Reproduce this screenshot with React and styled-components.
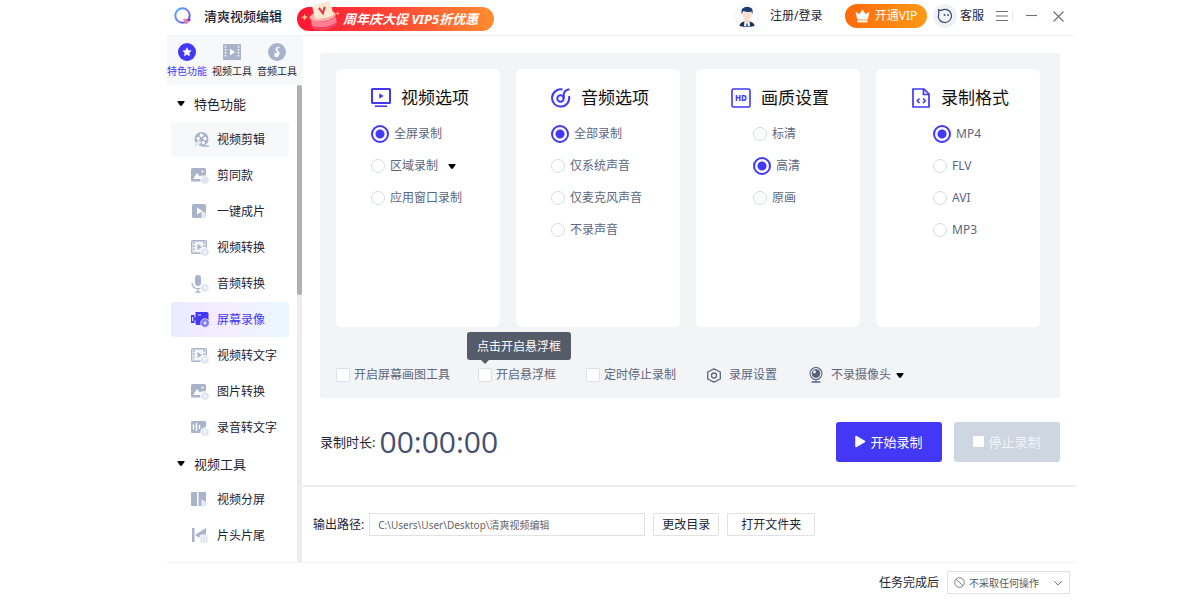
import React, { useState } from "react";
import styled, { createGlobalStyle, css } from "styled-components";

const color = {
  primary: "#4338f5",
  ink: "#1d2433",
  text: "#5d6680",
  icon: "#a9b4cc",
  iconSoft: "#dfe4ee",
  line: "#ededf0",
  panel: "#f3f4f6",
};

const GlobalStyle = createGlobalStyle`
  *, *::before, *::after { box-sizing: border-box; }
  body {
    margin: 0;
    background: #fff;
    color: ${color.ink};
    font-family: "Noto Sans", "Noto Sans CJK SC", sans-serif;
    font-size: 12px;
    line-height: 18px;
  }
  button, input, select { font: inherit; color: inherit; margin: 0; }
  button { padding: 0; border: 0; background: none; cursor: pointer; }
  svg { display: block; flex: none; }
`;

const Window = styled.div`
  display: flex;
  flex-direction: column;
  min-height: 100vh;
  margin: 0 124px 0 167px;
`;

/* Title bar */

const TitleBar = styled.header`
  display: flex;
  align-items: center;
  height: 36px;
  padding: 0 12px 3px 7px;
  border-bottom: 1px solid #f3f4f6;
`;

const AppName = styled.h1`
  margin: 0 15px 0 11px;
  font-size: 13px;
  font-weight: 500;
  white-space: nowrap;
`;

const Promo = styled.a`
  display: flex;
  align-items: center;
  width: 197px;
  height: 24px;
  margin-top: 5px;
  padding-left: 4px;
  gap: 3px;
  border-radius: 12px;
  background: linear-gradient(90deg, #ff1536, #ff4a35 50%, #ff8d30);
  color: #fff;
  font-size: 13px;
  font-weight: 700;
  font-style: italic;
  text-decoration: none;
  white-space: nowrap;

  svg { margin-top: -6px; }
`;

const Account = styled.div`
  display: flex;
  align-items: center;
  margin-left: auto;
`;

const LoginButton = styled.button`
  display: flex;
  align-items: center;
  gap: 11px;
  width: 110px;
  white-space: nowrap;
`;

const VipButton = styled.button`
  display: flex;
  align-items: center;
  justify-content: center;
  gap: 5px;
  width: 82px;
  height: 24px;
  border-radius: 12px;
  background: linear-gradient(90deg, #ff690c, #ff9a17);
  color: #fff;
`;

const SupportButton = styled.button`
  display: flex;
  align-items: center;
  gap: 3px;
  margin: 0 12px 0 6px;
`;

const WindowButtons = styled.div`
  display: flex;
  align-items: center;
  gap: 16px;
`;

const MenuButton = styled.button`
  margin-right: -12px;
`;

const Separator = styled.span`
  width: 1px;
  height: 12px;
  margin-right: -3px;
  background: #e6e9ef;
`;

/* Body */

const Body = styled.div`
  display: flex;
  flex: 1;
`;

const Sidebar = styled.aside`
  display: flex;
  flex-direction: column;
  flex: none;
  width: 136px;
`;

const Categories = styled.div`
  display: flex;
  gap: 5px;
  height: 49px;
  padding-top: 7px;
  background: #f7f8fa;
`;

const Category = styled.button`
  display: flex;
  flex-direction: column;
  align-items: center;
  gap: 2px;
  width: 40px;
  font-size: 10px;
  line-height: 16px;
  color: ${(p) => (p.$active ? color.primary : color.ink)};
  white-space: nowrap;
`;

const ToolArea = styled.div`
  display: flex;
  flex: 1;
`;

const ToolList = styled.nav`
  flex: 1;
  padding: 1px 8px 4px 4px;
`;

const GroupTitle = styled.button`
  display: flex;
  align-items: center;
  gap: 9px;
  width: 100%;
  height: 36px;
  padding: 0 0 1px 6px;
  font-size: 13px;
`;

const Tool = styled.a`
  display: flex;
  align-items: center;
  gap: 8px;
  height: 35px;
  margin-bottom: 1px;
  padding: 1px 0 0 20px;
  border-radius: 3px;
  color: ${color.ink};
  text-decoration: none;
  white-space: nowrap;
  ${(p) => p.$state === "hover" && css`background: #f7f8fa;`}
  ${(p) =>
    p.$state === "active" &&
    css`
      background: linear-gradient(90deg, #ebebff, #f6edff 50%, #e8f8ff);
      color: ${color.primary};
    `}
`;

const ScrollTrack = styled.div`
  width: 5px;
  margin-right: 1px;
  background: ${color.line};
`;

const ScrollThumb = styled.div`
  height: 210px;
  border-radius: 3px;
  background: #b1b1b3;
`;

const Main = styled.main`
  display: flex;
  flex-direction: column;
  flex: 1;
  min-width: 0;
`;

const Panel = styled.section`
  margin: 17px 16px 0 17px;
  padding: 16px 20px 8px 16px;
  border-radius: 3px;
  background: ${color.panel};
`;

const Cards = styled.div`
  display: grid;
  grid-template-columns: repeat(4, 1fr);
  gap: 16px;
`;

const Card = styled.fieldset`
  min-width: 0;
  min-height: 258px;
  margin: 0;
  padding: 15px 0 16px;
  border: 0;
  border-radius: 6px;
  background: #fff;
`;

const CardTitle = styled.legend`
  display: flex;
  float: left;
  align-items: center;
  gap: 10px;
  width: 100%;
  height: 28px;
  margin-bottom: 6px;
  padding: 0 0 0 35px;
  font-size: 17px;
  line-height: 28px;
  color: #111;
  white-space: nowrap;
`;

const Options = styled.div`
  clear: both;
  padding-left: ${(p) => (p.$narrow ? 57 : 35)}px;
`;

const Option = styled.label`
  display: flex;
  align-items: center;
  gap: 5px;
  height: 32px;
  color: ${color.text};
  white-space: nowrap;

  svg { margin-left: 5px; }
`;

const Radio = styled.input.attrs({ type: "radio" })`
  appearance: none;
  flex: none;
  width: 14px;
  height: 14px;
  border: 1px solid #d5dce6;
  border-radius: 50%;
  background: #fff;

  &:checked {
    width: 18px;
    height: 18px;
    border: 2px solid ${color.primary};
    background: radial-gradient(circle, ${color.primary} 4px, #fff 5px);
  }
`;

const Settings = styled.div`
  display: grid;
  grid-template-columns: 142px 108px 121px 102px auto;
  align-items: center;
  height: 30px;
  margin-top: 33px;
  color: ${color.text};
  white-space: nowrap;
`;

const CheckLabel = styled.label`
  position: relative;
  display: flex;
  align-items: center;
  gap: 4px;
`;

const Checkbox = styled.input.attrs({ type: "checkbox" })`
  appearance: none;
  width: 14px;
  height: 14px;
  border: 1px solid #d8e0ea;
  border-radius: 2px;
  background: #fff;

  &:checked { background: ${color.primary}; }
`;

const SettingButton = styled.button`
  display: flex;
  align-items: center;
  gap: 8px;

  svg:last-child:not(:first-child) { margin-left: -3px; }
`;

const Tooltip = styled.span`
  position: absolute;
  bottom: 24px;
  left: -11px;
  padding: 6px 10px 4px;
  border-radius: 3px;
  background: #545c69;
  color: #fff;

  &::after {
    content: "";
    position: absolute;
    top: 100%;
    left: 14px;
    border: 4px solid transparent;
    border-top-color: #545c69;
    border-bottom: 0;
  }
`;

const RecordBar = styled.section`
  display: flex;
  align-items: center;
  height: 89px;
  padding: 0 16px 0 17px;
  border-bottom: 2px solid ${color.line};
  font-size: 13px;
  white-space: nowrap;
`;

const Timer = styled.time`
  margin-left: 4px;
  font-family: "Open Sans", "Noto Sans", sans-serif;
  font-size: 30px;
  line-height: 40px;
  color: #46506e;
`;

const RecordButtons = styled.div`
  display: flex;
  gap: 12px;
  margin-left: auto;
`;

const RecordButton = styled.button`
  display: flex;
  align-items: center;
  justify-content: center;
  gap: 4px;
  width: 106px;
  height: 40px;
  border-radius: 3px;
  background: ${(p) => (p.disabled ? "#cdd6e1" : color.primary)};
  color: ${(p) => (p.disabled ? "#f1f4f8" : "#fff")};
`;

const OutputBar = styled.section`
  display: flex;
  align-items: center;
  flex: 1;
  gap: 8px;
  min-height: 75px;
  padding: 0 10px;
  white-space: nowrap;
`;

const PathLabel = styled.label`
  margin-right: -3px;
`;

const PathInput = styled.input`
  flex: 0 1 276px;
  min-width: 0;
  height: 23px;
  padding: 0 8px;
  border: 1px solid #e2e2e4;
  font-size: 10px;
  color: #666;
`;

const PlainButton = styled.button`
  height: 23px;
  padding: 0 ${(p) => (p.$wide ? 13 : 8)}px;
  border: 1px solid #e2e2e4;
  border-radius: 1px;
  background: #fff;
`;

const Footer = styled.footer`
  display: flex;
  align-items: center;
  justify-content: flex-end;
  gap: 8px;
  height: 38px;
  padding: 2px 6px 0;
  border-top: 1px solid #f3f3f5;
`;

const SelectBox = styled.span`
  display: grid;
  grid-template-columns: 21px 1fr 16px;
  align-items: center;
  width: 123px;
  height: 23px;
  border: 1px solid #e0e1e4;
  color: #555b66;

  svg { grid-row: 1; pointer-events: none; }
  svg:first-child { grid-column: 1; margin-left: 6px; }
  svg:last-child { grid-column: 3; }
`;

const Select = styled.select`
  grid-row: 1;
  grid-column: 1 / -1;
  appearance: none;
  width: 100%;
  padding: 0 0 0 21px;
  border: 0;
  background: none;
  font-size: 10px;
`;

/* Icons */

const Caret = () => (
  <svg width="8" height="5" viewBox="0 0 8 5" aria-hidden="true">
    <path d="M1 0h6q1 0 .6.8L5 4.5q-1 .8-2 0L.4.8Q0 0 1 0z" fill="#05070d" />
  </svg>
);

const Logo = () => (
  <svg width="19" height="19" viewBox="0 0 19 19" aria-hidden="true">
    <defs>
      <linearGradient id="logoRing" x1="0" y1="0" x2="1" y2="1">
        <stop offset="0" stopColor="#2fb4ff" />
        <stop offset=".5" stopColor="#7b7bff" />
        <stop offset="1" stopColor="#5a45f5" />
      </linearGradient>
    </defs>
    <circle cx="8.500" cy="8.500" r="7.200" fill="none" stroke="url(#logoRing)" strokeWidth="2" />
    <path d="M9 11.800 16 12q1 .3.300 1.200L12.800 17q-1 .7-1.500-.3z" fill="#f27cab" />
    <path d="m12.500 12 3.500 0q1 .300.300 1.200l-1.300 1.500z" fill="#6a3df2" />
  </svg>
);

const GiftDrum = () => (
  <svg width="39" height="30" viewBox="0 0 36 28" aria-hidden="true">
    <path d="m3 12 1 2.300 2.300.7L4 16l-.8 2.300-1-2.300-2.200-.7 2.300-1z" fill="#ffd08a" />
    <path d="M34 9.500l.6 1.500 1.400.5-1.400.6-.6 1.400-.5-1.400-1.500-.5 1.500-.6z" fill="#ffc06a" />
    <path d="M8 14q12 5 24-3l1 11q-2 4-11 5.300-9 .700-12-2.500z" fill="#f2405e" />
    <path d="M9.500 18q11 4 23-3l.5 5q-11 6.500-23 3z" fill="#ff8092" />
    <ellipse cx="20" cy="14" rx="12.200" ry="4.800" transform="rotate(-8 20 14)" fill="#ffb0ac" />
    <path d="M10 4.500 25.500 0q1.500 0 2 1.500L30 13q-8 4-17 3.500z" fill="#ffe9d2" />
    <path d="m16.500 6.500 3.700 5L22 5.300" fill="none" stroke="#dc3440" strokeWidth="1.900" />
  </svg>
);

const Avatar = () => (
  <svg width="24" height="24" viewBox="0 0 24 24" aria-hidden="true">
    <circle cx="12" cy="12" r="11.500" fill="#fff" stroke="#eef0f4" />
    <path d="M4.500 22q0-3.500 4.500-4.500h6q4.500 1 4.500 4.500-7.500 2-15 0z" fill="#1f3354" />
    <path d="M9.500 15.500h5v2.500L12 21l-2.500-3z" fill="#f9dac5" />
    <path d="m9.500 17.500 2.500 2.300 2.500-2.300.5 4.700H9z" fill="#fff" />
    <path d="M11.300 19.500h1.400l.6 3h-2.600z" fill="#2f7fd8" />
    <path d="M7.500 8h9v3.500q-.5 4-4.500 5-4-1-4.500-5z" fill="#fbe0cf" />
    <path d="M6.800 10.500Q5.500 5 8.800 3.800q3.200-2 6.800 0Q18.700 5 17.200 10.500l-.8-3q-4.400 1.300-7.900-.5l-.9 1z" fill="#1c3f72" />
  </svg>
);

const Crown = () => (
  <svg width="15" height="14" viewBox="0 0 15 14" aria-hidden="true">
    <path d="m1 3.500 3.600 2L7.500 1l2.900 4.500 3.600-2-1.600 6.700H2.600zM2.800 11.800h9.400V13H2.800z" fill="#fff" stroke="#fff" strokeWidth=".7" strokeLinejoin="round" />
  </svg>
);

const Support = () => (
  <svg width="24" height="24" viewBox="0 0 24 24" aria-hidden="true">
    <circle cx="12" cy="12" r="12" fill="#eff2f7" />
    <path d="M5.500 5.700 8 6.600a6.600 6.600 0 1 1-2.200 2.800z" fill="none" stroke="#3a4763" strokeWidth="1.200" strokeLinejoin="round" />
    <circle cx="11.500" cy="11" r=".9" fill="#3a4763" />
    <circle cx="15" cy="11" r=".9" fill="#3a4763" />
  </svg>
);

const Strokes = ({ d, width = 12, height = 12 }) => (
  <svg width={width} height={height} viewBox={`0 0 ${width} ${height}`} aria-hidden="true">
    <path d={d} fill="none" stroke="#6b6e76" strokeWidth="1.100" />
  </svg>
);

const categoryArt = {
  star: (
    <>
      <circle cx="9" cy="9" r="9" fill={color.primary} />
      <path d="m9 4.800 1.300 2.600 2.900.4-2.100 2 .5 2.900L9 11.400l-2.600 1.300.5-2.900-2.100-2 2.900-.4z" fill="#fff" stroke="#fff" strokeWidth=".5" strokeLinejoin="round" />
    </>
  ),
  film: (
    <>
      <rect y="1" width="18" height="16" rx="1" fill={color.icon} />
      <path d="M2.500 3v12M15.500 3v12" stroke="#fff" strokeWidth="1.500" strokeDasharray="1.500 1.500" />
      <path d="M7 5.800v6.400L12 9z" fill="#fff" />
    </>
  ),
  note: (
    <>
      <circle cx="9" cy="9" r="9" fill={color.icon} />
      <path d="M11.500 4.200q-3.300.5-3.200 2.300.2 1.300 2 2.300 1.300 1.700-.1 3.200" fill="none" stroke="#fff" strokeWidth="1.600" />
      <circle cx="8.500" cy="12" r="2.200" fill="#fff" />
    </>
  ),
};

const Badge = ({ children }) => (
  <>
    <circle cx="14" cy="13" r="4.200" fill={color.iconSoft} stroke="#fff" strokeWidth=".8" />
    {children}
  </>
);

const Clock = () => <Badge><path d="M13.700 11v2.300l1.700.8" fill="none" stroke="#fff" strokeWidth="1.100" /></Badge>;
const Letter = () => <Badge><path d="M12 11.700h4M14 11.700v3.500" fill="none" stroke="#fff" strokeWidth="1.100" /></Badge>;

const toolArt = {
  reel: (
    <>
      <circle cx="10.500" cy="8" r="7" fill={color.icon} />
      <path d="M10.500 15h7.300" stroke={color.icon} strokeWidth="1.500" />
      <g fill="#fff">
        <circle cx="10.500" cy="4.300" r="1.700" />
        <circle cx="14" cy="7.500" r="1.700" />
        <circle cx="7.200" cy="7.500" r="1.700" />
        <circle cx="12.300" cy="11.700" r="1.600" />
      </g>
      <path d="m1.500 16 6-6.500 2.500 2-5.500 4.700z" fill={color.iconSoft} stroke="#fff" strokeWidth=".6" />
    </>
  ),
  picture: (
    <>
      <rect y="1" width="15" height="13.500" rx="1.500" fill={color.icon} />
      <path d="m2 12 4-6 3 3.800L11 8l2.500 4z" fill="#fff" />
      <circle cx="11.500" cy="4.500" r="1.100" fill="#fff" />
      <Badge />
    </>
  ),
  clip: (
    <>
      <rect x="1" y="1" width="14" height="14" rx="1.500" fill={color.icon} />
      <path d="M6 4.500v7L11.500 8z" fill="#fff" />
      <path d="M11 8.500v8l6-4z" fill={color.iconSoft} stroke="#fff" strokeWidth=".8" />
    </>
  ),
  film: (
    <>
      <rect x=".7" y="1.700" width="14.600" height="12.600" rx="1" fill="#f3f5f9" stroke={color.icon} strokeWidth="1.400" />
      <path d="M3 3v10M13 3v10" stroke={color.icon} strokeWidth="1.700" strokeDasharray="1.700 1.500" />
      <path d="M6.500 5v6l4.500-3z" fill={color.icon} />
    </>
  ),
  mic: (
    <>
      <rect x="4" y="0" width="6" height="11" rx="3" fill={color.icon} />
      <path d="M1 8q.5 5.500 6 5.800Q11 13.600 12.500 10M7 14v3M4.500 17h5" fill="none" stroke={color.icon} strokeWidth="1.300" />
      <Clock />
    </>
  ),
  camera: (
    <>
      <path d="M4.500 1H16q1.500 0 1.500 1.500V14H6q-1.500 0-1.500-1.500zM0 4h3.500v8H0z" fill={color.primary} />
      <path d="M3 8h2" stroke={color.primary} strokeWidth="3" />
      <path d="M1.700 6v4M7 4h3" stroke="#e8e7ff" strokeWidth="1.200" />
      <circle cx="14" cy="12" r="4.300" fill="#7c75fa" stroke="#dcdaff" strokeWidth=".9" />
      <circle cx="14" cy="12" r="1.700" fill="#dcdaff" />
    </>
  ),
  bars: (
    <>
      <rect y="2" width="15" height="12" rx="1" fill={color.icon} />
      <path d="M2.500 5.500v5M5.500 4v8M8.500 6v4" stroke="#fff" strokeWidth="1.400" />
      <Letter />
    </>
  ),
  split: (
    <>
      <path d="M0 2q0-1 1-1h5v14H1q-1 0-1-1zM7.500 1H14q1 0 1 1v13H7.500z" fill={color.icon} />
      <path d="M11 9v8l6-4z" fill={color.iconSoft} stroke="#fff" strokeWidth=".8" />
    </>
  ),
  ends: (
    <>
      <path d="M1 1h2.500v14H1zM15 1v14L4 8z" fill={color.icon} />
      <rect x="9" y="8" width="8" height="8" rx="1" fill={color.iconSoft} stroke="#fff" strokeWidth=".8" />
      <path d="M11.500 9v6M14.500 9v6" stroke="#fff" strokeDasharray="1.500 1" />
    </>
  ),
};
toolArt.filmClock = <>{toolArt.film}<Clock /></>;
toolArt.filmText = <>{toolArt.film}<Letter /></>;
toolArt.pictureClock = <>{toolArt.picture}<Clock /></>;

const cardArt = {
  video: (
    <>
      <rect x="1" y="1" width="18" height="14" rx=".5" />
      <path d="M4 18.200h12" strokeWidth="1.600" />
      <path d="M8.500 5.800v4.400l3.700-2.200z" fill={color.primary} stroke={color.primary} strokeWidth=".6" />
    </>
  ),
  audio: (
    <>
      <path d="M11.500 1.600A8.600 8.600 0 1 0 18 8" />
      <circle cx="9.500" cy="10.500" r="3.200" />
      <path d="M12.700 10.500V6.500Q13 2.200 18.500 1.200" />
    </>
  ),
  hd: (
    <>
      <rect x="1" y="1" width="18" height="18" rx="1.500" strokeWidth="1.600" />
      <text x="10" y="13" textAnchor="middle" fontFamily="Noto Sans, sans-serif" fontSize="8" fontWeight="800" fill={color.primary} stroke="none">HD</text>
    </>
  ),
  file: (
    <>
      <path d="M2 1h11l5 5v13H2zM12.500 1v5.500H18" strokeWidth="1.700" />
      <path d="m8.500 10.500-2.300 2.300 2.300 2.300M12 10.500l2.300 2.300-2.300 2.300" strokeWidth="1.500" />
    </>
  ),
};

const GearIcon = () => (
  <svg width="14" height="15" viewBox="0 0 14 15" fill="none" stroke={color.text} strokeWidth="1.300" aria-hidden="true">
    <path d="M7 .8 13.300 4v7L7 14.200.7 11V4z" strokeLinejoin="round" />
    <circle cx="7" cy="7.500" r="2.500" />
  </svg>
);

const WebcamIcon = () => (
  <svg width="14" height="16" viewBox="0 0 14 16" fill="none" stroke={color.text} aria-hidden="true">
    <circle cx="7" cy="6.500" r="6" strokeWidth="1.100" />
    <circle cx="7" cy="6.500" r="3.900" fill="#59627c" />
    <circle cx="5.500" cy="5" r="1.400" fill="#fff" stroke="none" />
    <path d="M7 12.500v2M2.500 15h9" strokeWidth="1.300" />
  </svg>
);

/* Data */

const categories = [
  { label: "特色功能", icon: "star", active: true },
  { label: "视频工具", icon: "film" },
  { label: "音频工具", icon: "note" },
];

const groups = [
  {
    title: "特色功能",
    tools: [
      ["视频剪辑", "reel", "hover"],
      ["剪同款", "picture"],
      ["一键成片", "clip"],
      ["视频转换", "filmClock"],
      ["音频转换", "mic"],
      ["屏幕录像", "camera", "active"],
      ["视频转文字", "filmText"],
      ["图片转换", "pictureClock"],
      ["录音转文字", "bars"],
    ],
  },
  {
    title: "视频工具",
    tools: [
      ["视频分屏", "split"],
      ["片头片尾", "ends"],
    ],
  },
];

const cards = [
  { id: "video", title: "视频选项", options: ["全屏录制", "区域录制", "应用窗口录制"], initial: "全屏录制", menu: "区域录制" },
  { id: "audio", title: "音频选项", options: ["全部录制", "仅系统声音", "仅麦克风声音", "不录声音"], initial: "全部录制" },
  { id: "hd", title: "画质设置", options: ["标清", "高清", "原画"], initial: "高清", narrow: true },
  { id: "file", title: "录制格式", options: ["MP4", "FLV", "AVI", "MP3"], initial: "MP4", narrow: true },
];

function OptionCard({ id, title, options, initial, menu, narrow }) {
  const [value, setValue] = useState(initial);
  return (
    <Card>
      <CardTitle>
        <svg width="20" height="20" viewBox="0 0 20 20" fill="none" stroke={color.primary} strokeWidth="2" aria-hidden="true">
          {cardArt[id]}
        </svg>
        {title}
      </CardTitle>
      <Options $narrow={narrow}>
        {options.map((option) => (
          <Option key={option}>
            <Radio name={id} checked={value === option} onChange={() => setValue(option)} />
            {option}
            {menu === option && <Caret />}
          </Option>
        ))}
      </Options>
    </Card>
  );
}

export default function App() {
  return (
    <>
      <GlobalStyle />
      <Window>
        <TitleBar>
          <Logo />
          <AppName>清爽视频编辑</AppName>
          <Promo href="#promo">
            <GiftDrum />
            周年庆大促 VIP5折优惠
          </Promo>
          <Account>
            <LoginButton><Avatar />注册/登录</LoginButton>
            <VipButton><Crown />开通VIP</VipButton>
            <SupportButton><Support />客服</SupportButton>
            <WindowButtons>
              <MenuButton aria-label="菜单"><Strokes d="M0 1.500h12M0 6h12M0 10.500h12" /></MenuButton>
              <Separator />
              <button aria-label="最小化"><Strokes width={11} d="M0 5.500h11" /></button>
              <button aria-label="关闭"><Strokes width={11} height={11} d="m.5.5 10 10m0-10-10 10" /></button>
            </WindowButtons>
          </Account>
        </TitleBar>

        <Body>
          <Sidebar>
            <Categories>
              {categories.map(({ label, icon, active }) => (
                <Category key={label} $active={active}>
                  <svg width="18" height="18" viewBox="0 0 18 18" aria-hidden="true">{categoryArt[icon]}</svg>
                  {label}
                </Category>
              ))}
            </Categories>
            <ToolArea>
              <ToolList>
                {groups.map((group) => (
                  <div key={group.title}>
                    <GroupTitle><Caret />{group.title}</GroupTitle>
                    {group.tools.map(([label, icon, state]) => (
                      <Tool key={label} href="#tool" $state={state}>
                        <svg width="18" height="18" viewBox="0 0 18 18" aria-hidden="true">{toolArt[icon]}</svg>
                        {label}
                      </Tool>
                    ))}
                  </div>
                ))}
              </ToolList>
              <ScrollTrack><ScrollThumb /></ScrollTrack>
            </ToolArea>
          </Sidebar>

          <Main>
            <Panel>
              <Cards>
                {cards.map((card) => <OptionCard key={card.id} {...card} />)}
              </Cards>
              <Settings>
                <CheckLabel><Checkbox />开启屏幕画图工具</CheckLabel>
                <CheckLabel>
                  <Checkbox />开启悬浮框
                  <Tooltip role="tooltip">点击开启悬浮框</Tooltip>
                </CheckLabel>
                <CheckLabel><Checkbox />定时停止录制</CheckLabel>
                <SettingButton><GearIcon />录屏设置</SettingButton>
                <SettingButton><WebcamIcon />不录摄像头<Caret /></SettingButton>
              </Settings>
            </Panel>

            <RecordBar>
              录制时长:
              <Timer>00:00:00</Timer>
              <RecordButtons>
                <RecordButton>
                  <svg width="11" height="13" viewBox="0 0 11 13" aria-hidden="true">
                    <path d="M1 1.500v10l8.500-5z" fill="#fff" stroke="#fff" strokeWidth="1.500" strokeLinejoin="round" />
                  </svg>
                  开始录制
                </RecordButton>
                <RecordButton disabled>
                  <svg width="11" height="11" viewBox="0 0 11 11" aria-hidden="true">
                    <rect width="11" height="11" rx="1" fill="#fff" />
                  </svg>
                  停止录制
                </RecordButton>
              </RecordButtons>
            </RecordBar>

            <OutputBar>
              <PathLabel htmlFor="path">输出路径:</PathLabel>
              <PathInput id="path" defaultValue="C:\Users\User\Desktop\清爽视频编辑" />
              <PlainButton>更改目录</PlainButton>
              <PlainButton $wide>打开文件夹</PlainButton>
            </OutputBar>
          </Main>
        </Body>

        <Footer>
          <label htmlFor="after">任务完成后</label>
          <SelectBox>
            <svg width="11" height="11" viewBox="0 0 11 11" fill="none" stroke="#777d87" aria-hidden="true">
              <circle cx="5.500" cy="5.500" r="4.800" />
              <path d="m2 2.200 7 6.600" />
            </svg>
            <Select id="after"><option>不采取任何操作</option></Select>
            <svg width="10" height="6" viewBox="0 0 10 6" fill="none" stroke="#777d87" aria-hidden="true">
              <path d="m1 1 4 4 4-4" />
            </svg>
          </SelectBox>
        </Footer>
      </Window>
    </>
  );
}
